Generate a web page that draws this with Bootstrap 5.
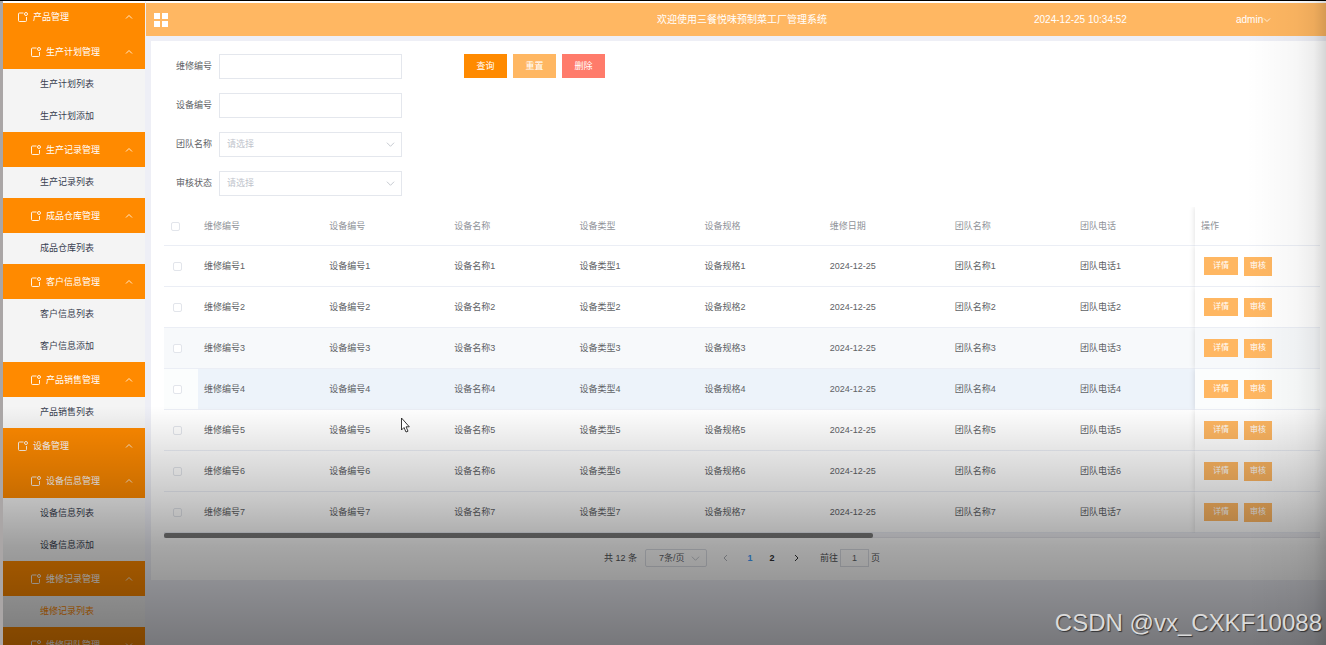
<!DOCTYPE html>
<html lang="zh-CN">
<head>
<meta charset="utf-8">
<meta name="viewport" content="width=device-width, initial-scale=1">
<title>三餐悦味预制菜工厂管理系统</title>
<link rel="stylesheet" href="https://cdn.jsdelivr.net/npm/bootstrap@5.3.0/dist/css/bootstrap.min.css">
<style>
  :root { --brand: #ff8a00; --brand-soft: #ffb762; --line: #e4e7ed; --ink: #606266; --muted: #909399; }
  body { font: 9px/15px "Liberation Sans", "Noto Sans CJK SC", sans-serif; color: var(--ink); background: #eeeff6; border-top: 1px solid #000; }
  button, input, select { font: inherit; }
  svg { display: block; flex: none; }

  .side { width: 146px; border-left: 3px solid #aaa6a6; border-right: 1px solid #eeeff6; padding-top: 2px; background: #fff; }
  .side-scroll { background: #f4f4f4; }
  .side-scroll > nav { margin-top: -4px; }
  .menu-head { height: 35px; width: 100%; border: 0; background: var(--brand); color: #fff; padding: 1px 12px 0 28px; gap: 5px; text-align: left; }
  .menu-head.top-level { padding-left: 15px; }
  .menu-list { gap: 1px; }
  .menu-list a { height: 31px; padding-left: 37px; color: #384050; text-decoration: none; }
  .menu-list a.current { color: var(--brand); }

  .topbar { display: grid; grid-template-columns: 511fr 377fr 202fr 90fr; height: 33px; background: var(--brand-soft); color: #fff; font-size: 10px; }
  .topbar button { background: none; border: 0; color: inherit; padding: 0; }
  .workspace { padding-top: 2px; background: #fff; }
  .backdrop-area { background: #eeeff6; padding: 5px 0 0 5px; }
  .panel { background: #fff; padding: 13px 6px 13px 13px; }

  .search-form { display: grid; grid-template-columns: 48px 183px; column-gap: 7px; row-gap: 14px; }
  .search-form label { text-align: right; }
  .field { height: 25px; border: 1px solid var(--line); border-radius: 0; font-size: 9px; line-height: 15px; padding: 0 7px; color: #c0c4cc; background-color: #fff; }
  .field.form-select { background-size: 9px 9px; background-position: right 6px center;
    background-image: url("data:image/svg+xml,%3Csvg xmlns='http://www.w3.org/2000/svg' viewBox='0 0 10 10'%3E%3Cpath d='M1 3l4 4 4-4' fill='none' stroke='%23c0c4cc'/%3E%3C/svg%3E"); }
  .actions { margin-left: 62px; gap: 6px; }
  .act { height: 24px; width: 43px; border: 0; border-radius: 0; padding: 0; font-size: 9px; line-height: 15px; color: #fff; }
  .act-main { background: var(--brand); } .act-soft { background: var(--brand-soft); } .act-del { background: #ff7b6b; }

  .grid-table { table-layout: fixed; width: 100%; margin-top: 11px; border-collapse: separate; border-spacing: 0; }
  .grid-table th, .grid-table td { padding: 0 6px; height: 41px; border-bottom: 1px solid #ebeef5; white-space: nowrap; }
  .grid-table th { height: 39px; font-weight: 400; color: var(--muted); }
  .grid-table .pick { padding-left: 9px; } .grid-table th.pick { padding-left: 7px; }
  .grid-table input { appearance: none; display: block; width: 9px; height: 9px; margin: 0; border: 1px solid #e2e5eb; border-radius: 2px; background: #fff; }
  .grid-table .fixed-col { box-shadow: -1px 0 5px rgba(0,0,0,.1); clip-path: inset(0 0 0 -8px); }
  .striped td { background: #f7f9fb; }
  .hovered td { background: #edf3fa; } .hovered .pick, .hovered .fixed-col { background: #fbfdfd; }
  .mini-set { gap: 6px; padding-left: 3px; }
  .mini { border: 0; background: var(--brand-soft); color: #fff; font-size: 8px; line-height: 12px; height: 19px; padding: 0 6px; }
  .mini.wide { padding: 0 9px; height: 18px; }
  .track { height: 5px; background: #f1f1f6; border-bottom: 1px solid #e6e6ec; }
  .thumb { height: 5px; border-radius: 2px; background: #7c7c7c; }

  .pager { margin-top: 11px; height: 18px; color: #505256; }
  .pager button { border: 0; background: none; padding: 0; width: 22px; color: #303133; }
  .pager .field { height: 18px; width: 62px; padding: 0 13px; border-color: #dcdfe6; color: var(--ink); border-radius: 2px; }
  .pager .page-box { width: 29px; padding: 0; margin: 0 2px; border-radius: 0; }
  .pager .step { margin: 0 2px 0 0; } .pager .step-next { margin: 0 13px 0 2px; }

  .shade { inset: 0 0 0 3px; pointer-events: none; z-index: 5;
    background: linear-gradient(to left, rgba(0,0,0,.16), rgba(0,0,0,.07) 12px, rgba(0,0,0,.03) 30px, transparent 80px),
      linear-gradient(to bottom, transparent 405px, rgba(0,0,0,.06) 430px, rgba(0,0,0,.22) 499px, rgba(0,0,0,.35) 545px, rgba(0,0,0,.41) 585px, rgba(0,0,0,.5) 645px); }
  .cursor { left: 400px; top: 415px; z-index: 6; }
  .stamp { right: 4px; bottom: 4px; z-index: 7; font: 24px/36px "Liberation Sans", sans-serif; color: #dadada; text-shadow: 1px 1px 1px rgba(0,0,0,.6); }
</style>
</head>
<body class="vh-100 overflow-hidden position-relative">
<svg width="0" height="0" class="position-absolute" aria-hidden="true">
  <symbol id="i-menu" viewBox="0 0 10 10"><path d="M5.500 1H1.500Q.5 1 .5 2V8.500Q.5 9.500 1.500 9.500H7.500Q8.500 9.500 8.500 8.500V5" fill="none" stroke="currentColor" stroke-width=".9"/><circle cx="8" cy="2" r="1.500" fill="none" stroke="currentColor" stroke-width=".9"/></symbol>
  <symbol id="i-up" viewBox="0 0 8 8"><path d="M1 5.500l3-3 3 3" fill="none" stroke="currentColor" stroke-width=".8"/></symbol>
  <symbol id="i-down" viewBox="0 0 8 8"><path d="M1 2.500l3 3 3-3" fill="none" stroke="currentColor" stroke-width=".8"/></symbol>
</svg>

<div class="d-flex h-100">
  <aside class="side flex-shrink-0 h-100">
    <div class="side-scroll h-100 overflow-hidden"><nav id="menu" aria-label="主菜单"></nav></div>
  </aside>

  <div class="workspace flex-grow-1 d-flex flex-column">
    <header class="topbar align-items-center">
      <div class="ps-2"><button type="button" class="d-block" aria-label="折叠菜单"><svg width="14" height="14" viewBox="0 0 14 14" fill="#fff"><path d="M0 0h6v6H0zM8 0h6v6H8zM0 8h6v6H0zM8 8h6v6H8z"/></svg></button></div>
      <div>欢迎使用三餐悦味预制菜工厂管理系统</div>
      <div>2024-12-25 10:34:52</div>
      <div><button type="button" class="d-flex align-items-center">admin<svg width="8" height="8"><use href="#i-down"/></svg></button></div>
    </header>

    <div class="backdrop-area flex-grow-1">
      <main class="panel">
        <div class="d-flex">
          <form class="search-form align-items-center">
            <label for="f1">维修编号</label><input id="f1" class="form-control field">
            <label for="f2">设备编号</label><input id="f2" class="form-control field">
            <label for="f3">团队名称</label><select id="f3" class="form-select field"><option>请选择</option></select>
            <label for="f4">审核状态</label><select id="f4" class="form-select field"><option>请选择</option></select>
          </form>
          <div class="d-flex align-items-start actions">
            <button type="button" class="act act-main">查询</button>
            <button type="button" class="act act-soft">重置</button>
            <button type="button" class="act act-del">删除</button>
          </div>
        </div>

        <table class="grid-table">
          <colgroup><col style="width:34px"><col><col><col><col><col><col><col><col style="width:121px"><col style="width:125px"></colgroup>
          <thead><tr><th class="pick"><input type="checkbox" aria-label="全选"></th><th>维修编号</th><th>设备编号</th><th>设备名称</th><th>设备类型</th><th>设备规格</th><th>维修日期</th><th>团队名称</th><th>团队电话</th><th class="fixed-col">操作</th></tr></thead>
          <tbody id="rows"></tbody>
        </table>
        <div class="track"><div class="thumb" style="width:61.3%"></div></div>

        <div class="pager d-flex justify-content-center align-items-center">
          <span class="me-2">共 12 条</span>
          <select class="form-select field me-2" aria-label="每页条数"><option>7条/页</option></select>
          <button type="button" aria-label="上一页" class="step d-flex justify-content-center"><svg width="8" height="8" viewBox="0 0 8 8"><path d="M5 1L2 4l3 3" fill="none" stroke="#b0b3ba"/></svg></button>
          <button type="button" class="fw-bold" style="color:#409eff">1</button>
          <button type="button" class="fw-bold">2</button>
          <button type="button" aria-label="下一页" class="step-next d-flex justify-content-center"><svg width="8" height="8" viewBox="0 0 8 8"><path d="M3 1l3 3-3 3" fill="none" stroke="#303133"/></svg></button>
          <label for="jump">前往</label><input id="jump" class="form-control field page-box text-center" value="1"><span>页</span>
        </div>
      </main>
    </div>
  </div>
</div>

<div class="shade position-absolute"></div>
<svg class="cursor position-absolute" width="10" height="17" viewBox="0 0 10 17" aria-hidden="true"><path d="M1.500 2v12l2.500-2.500 2 4.500 2-.8-2-4.400h3.300z" fill="#fff" stroke="#222" stroke-width=".9"/></svg>
<div class="stamp position-absolute">CSDN @vx_CXKF10088</div>

<script>
  const menu = [
    ['产品管理', null],
    ['生产计划管理', ['生产计划列表', '生产计划添加']],
    ['生产记录管理', ['生产记录列表']],
    ['成品仓库管理', ['成品仓库列表']],
    ['客户信息管理', ['客户信息列表', '客户信息添加']],
    ['产品销售管理', ['产品销售列表']],
    ['设备管理', null],
    ['设备信息管理', ['设备信息列表', '设备信息添加']],
    ['维修记录管理', ['维修记录列表']],
    ['维修团队管理', []]
  ];
  document.getElementById('menu').innerHTML = menu.map(([name, items]) => `
    <button type="button" class="menu-head d-flex align-items-center ${items ? '' : 'top-level'}">
      <svg width="10" height="10"><use href="#i-menu"/></svg><span class="flex-grow-1">${name}</span>
      <svg width="8" height="8"><use href="#${items && !items.length ? 'i-down' : 'i-up'}"/></svg>
    </button>` + (items && items.length ? `<ul class="menu-list list-unstyled m-0 d-flex flex-column">${items.map(t =>
      `<li><a href="#" class="d-flex align-items-center ${t === '维修记录列表' ? 'current' : ''}">${t}</a></li>`).join('')}</ul>` : '')).join('');

  document.getElementById('rows').innerHTML = [1, 2, 3, 4, 5, 6, 7].map(n => `
    <tr class="${n === 3 ? 'striped' : n === 4 ? 'hovered' : ''}">
      <td class="pick"><input type="checkbox" aria-label="选择第${n}行"></td>
      <td>维修编号${n}</td><td>设备编号${n}</td><td>设备名称${n}</td><td>设备类型${n}</td><td>设备规格${n}</td>
      <td>2024-12-25</td><td>团队名称${n}</td><td>团队电话${n}</td>
      <td class="fixed-col"><div class="mini-set d-flex"><button type="button" class="mini wide">详情</button><button type="button" class="mini">审核</button></div></td>
    </tr>`).join('');
</script>
<script src="https://cdn.jsdelivr.net/npm/bootstrap@5.3.0/dist/js/bootstrap.bundle.min.js"></script>
</body>
</html>
